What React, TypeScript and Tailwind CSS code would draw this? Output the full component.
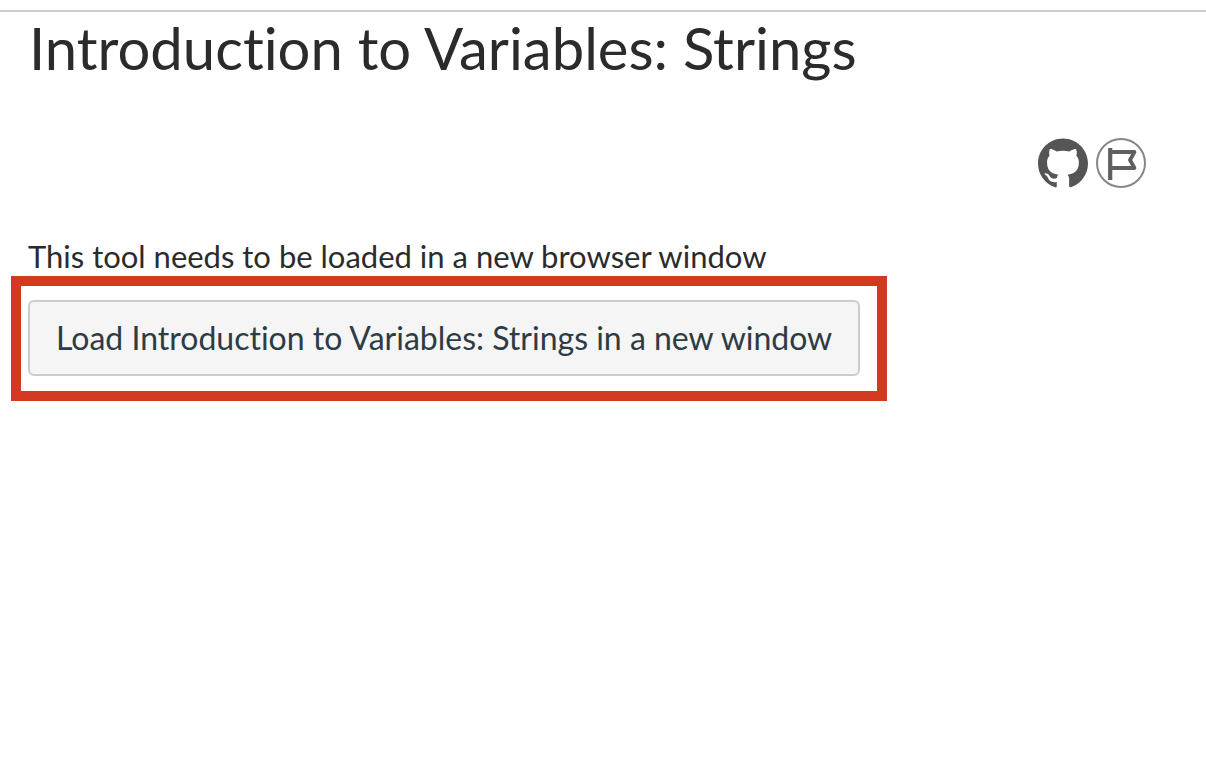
import { SiGithub } from "react-icons/si";

function FlagIcon() {
  return (
    <svg viewBox="0 0 50 50" className="size-[50px]" fill="none" aria-hidden="true">
      <circle cx="25" cy="25" r="24" stroke="#868686" strokeWidth="2" />
      <path d="M14.2 10v32" stroke="#5f5f5f" strokeWidth="4.2" />
      <path
        d="M14.2 14H38.4L34 22l4.4 8H14.2"
        stroke="#5f5f5f"
        strokeWidth="3.8"
        strokeLinejoin="round"
      />
    </svg>
  );
}

export default function App() {
  return (
    <main className="min-h-screen bg-white pt-2.5 font-['Lato',sans-serif] text-[#2b2b2b] [font-variant-ligatures:none]">
      <header className="border-t-2 border-[#c7cdd1] px-[29px] pt-0.5">
        <h1 className="text-[58px] leading-[68px]">Introduction to Variables: Strings</h1>
      </header>
      <nav aria-label="Lesson links" className="mt-14 flex justify-end gap-2 pr-[60px]">
        <a href="#github" aria-label="View on GitHub">
          <SiGithub className="size-[50px] text-[#555555]" />
        </a>
        <a href="#flag" aria-label="Report an issue">
          <FlagIcon />
        </a>
      </nav>
      <section className="px-[11px] pt-12">
        <p className="pl-[17px] text-[31px] leading-10">
          This tool needs to be loaded in a new browser window
        </p>
        <div className="w-fit border-10 border-[#d23920] pt-3.5 pr-[17px] pb-[15px] pl-[7px]">
          <button
            type="button"
            className="rounded-md border-2 border-[#c7cdd1] bg-[#f5f5f5] px-[26px] py-4 text-[32px] leading-10 text-[#2d3b45]"
          >
            Load Introduction to Variables: Strings in a new window
          </button>
        </div>
      </section>
    </main>
  );
}
